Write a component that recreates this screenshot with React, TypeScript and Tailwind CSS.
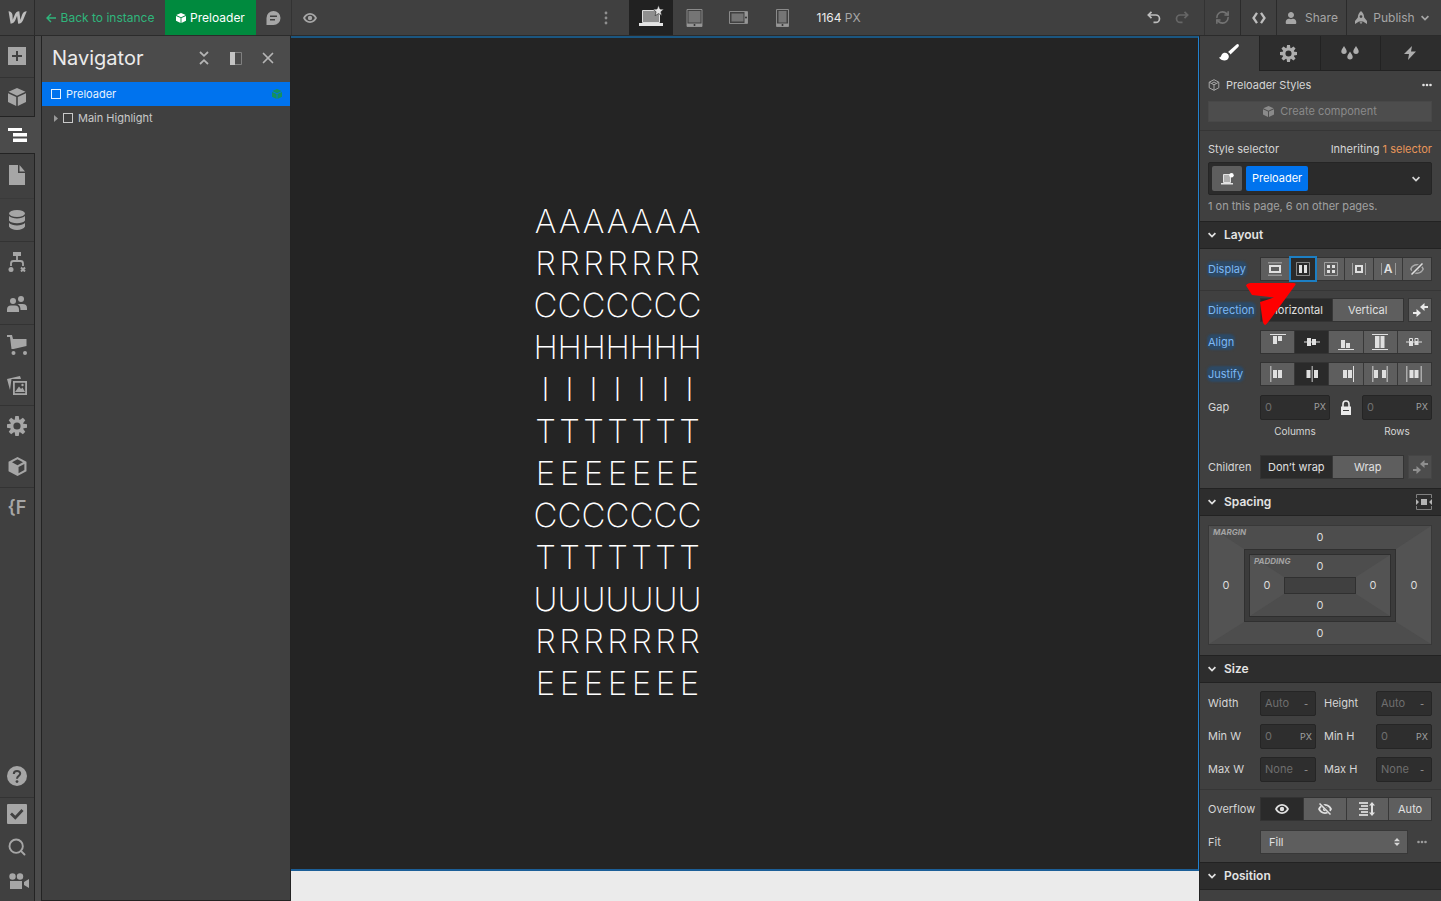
import type { ReactNode } from 'react'
import { RefreshCw, Search, X } from 'lucide-react'
import { FaUser } from 'react-icons/fa'
import { clsx } from 'clsx'

const WORD = 'ARCHITECTURE'.split('')

function Svg({ w = 16, h = w, box, children }: { w?: number; h?: number; box?: string; children: ReactNode }) {
  return (
    <svg width={w} height={h} viewBox={box ?? `0 0 ${w} ${h}`} fill="currentColor" className="shrink-0" aria-hidden>
      {children}
    </svg>
  )
}

/* ---------- icons ---------- */

const Logo = () => (
  <Svg w={19} h={13} box="0 4 24 16">
    <path d="M17.802 8.560s-1.946 6.103-2.105 6.607c-.058-.504-1.450-11.130-1.450-11.130-3.167 0-4.857 2.243-5.742 4.605 0 0-2.252 5.832-2.437 6.317-.013-.460-.344-6.272-.344-6.272C5.530 5.769 2.859 4.037.690 4.037l2.613 15.889c3.328-.013 5.125-2.256 6.063-4.618 0 0 2-5.172 2.081-5.410.013.226 1.437 10.028 1.437 10.028 3.340 0 5.139-2.110 6.104-4.389L23.700 4.037c-3.300 0-5.033 2.243-5.898 4.523z" />
  </Svg>
)

const Cube = ({ size = 18 }: { size?: number }) => (
  <Svg w={size} box="0 0 18 18">
    <path d="M9 0l8.500 3.800L9 7.800.500 3.800zM0 5.300l8.200 3.800V18L0 14zM18 5.300L9.800 9.100V18L18 14z" />
  </Svg>
)

const CubeLine = ({ size = 18 }: { size?: number }) => (
  <Svg w={size} box="0 0 18 18">
    <path d="M9 0l8.500 4.500v9L9 18 .5 13.500v-9zm0 2.200L3.800 5 9 7.800 14.200 5zM10 9.500v5.800l5.500-3V6.600z" fillRule="evenodd" />
  </Svg>
)

const CubeThin = () => (
  <Svg w={12} box="0 0 12 12">
    <path d="M6 .7l4.800 2.500v5.600L6 11.300 1.200 8.800V3.200zM1.200 3.200L6 5.800l4.800-2.600M6 5.800v5.500M3.500 4.500L6 3l2.500 1.500" fill="none" stroke="currentColor" />
  </Svg>
)

const Gear = ({ size = 20 }: { size?: number }) => (
  <Svg w={size} box="0 0 20 20">
    {[0, 45, 90, 135].map((a) => (
      <path key={a} d="M8.300 0h3.400l.8 5h-5zM8.300 20h3.400l.8-5h-5z" transform={`rotate(${a} 10 10)`} />
    ))}
    <circle cx="10" cy="10" r="5.200" fill="none" stroke="currentColor" strokeWidth="3.200" />
  </Svg>
)

const Brush = () => (
  <Svg w={20} h={17}>
    <path d="M0 13.500c2 0 2-1.500 2.800-3C4 8.500 7 8.200 8.800 10c1.800 2 1 4.500-.6 5.800C5.500 17.500 1.500 16 0 13.500zM9 8L17.500.500q1.500-1 2.200.200.500 1-.5 2.200L11.500 10.500q-.8-1.700-2.500-2.500z" />
  </Svg>
)

const Eye = ({ off = false }: { off?: boolean }) => (
  <Svg w={14} h={12}>
    <path d="M7 1C3.600 1 1.300 3.200 0 6c1.300 2.800 3.600 5 7 5s5.700-2.200 7-5C12.700 3.200 10.400 1 7 1zm0 1.800c2.300 0 3.900 1.300 4.900 3.200-1 1.900-2.600 3.200-4.900 3.200S3.100 7.900 2.100 6C3.100 4.100 4.700 2.800 7 2.800z" fillRule="evenodd" />
    <circle cx="7" cy="6" r="2.200" />
    {off && (
      <>
        <path d="M1.500-.5l12 12" stroke="#5e5e5e" strokeWidth="3" />
        <path d="M1.500.5l11 11" stroke="currentColor" strokeWidth="1.500" />
      </>
    )}
  </Svg>
)

const Chevron = () => (
  <Svg w={8} h={6}>
    <path d="M.6 1.200L4 4.600l3.400-3.400" fill="none" stroke="currentColor" strokeWidth="1.700" />
  </Svg>
)

const ThreeDots = () => (
  <Svg w={10} h={4}>
    <circle cx="1.500" cy="2" r="1.300" />
    <circle cx="5" cy="2" r="1.300" />
    <circle cx="8.500" cy="2" r="1.300" />
  </Svg>
)

const Desktop = () => (
  <Svg w={26} h={22}>
    <path d="M4.500 5.500h17v12h-17z" fill="#8f8f8f" stroke="#dcdcdc" />
    <path d="M1 18h24v3H1z" fill="#e4e4e4" />
    <path d="M20.500.300l1.500 3.700 4 .3-3.100 2.500 1 3.900-3.400-2.100-3.400 2.100 1-3.900L15 4.300l4-.3z" fill="#e4e4e4" stroke="#212121" strokeWidth=".6" />
  </Svg>
)

const Tablet = () => (
  <Svg w={17} h={18}>
    <path d="M1 .5h15v17H1z" fill="none" stroke="#8a8a8a" />
    <path d="M2.500 2h12v11.500h-12z" fill="#757575" />
    <path d="M1 14.500h15v3H1z" fill="#969696" />
    <circle cx="8.500" cy="16" r="1" fill="#333" />
  </Svg>
)

const PhoneWide = () => (
  <Svg w={19} h={13}>
    <path d="M.500.500h18v12H.500z" fill="none" stroke="#8a8a8a" />
    <path d="M2.500 2.500h12v8h-12z" fill="#757575" />
    <path d="M15.500 1h3v11h-3z" fill="#969696" />
    <circle cx="17" cy="6.500" r="1" fill="#333" />
  </Svg>
)

const Phone = () => (
  <Svg w={13} h={18}>
    <path d="M.500.500h12v17H.500z" fill="none" stroke="#8a8a8a" />
    <path d="M2.500 2h8v11.500h-8z" fill="#757575" />
    <path d="M.500 14.500h12v3H.500z" fill="#969696" />
    <circle cx="6.500" cy="16" r="1" fill="#333" />
  </Svg>
)

const Undo = ({ flip = false }: { flip?: boolean }) => (
  <Svg w={14} h={13}>
    <g transform={flip ? 'matrix(-1 0 0 1 14 0)' : undefined} fill="none" stroke="currentColor" strokeWidth="1.700">
      <path d="M4.500.800L1.300 4l3.200 3.200M1.500 4h7.300a3.700 3.700 0 0 1 0 7.400H6.500" />
    </g>
  </Svg>
)

const Swap = () => (
  <Svg w={15} h={14}>
    <path d="M7 4L11.500 0v3H15v2h-3.500v3zM8 10L3.500 6v3H0v2h3.500v3z" />
  </Svg>
)

/* ---------- left rail ---------- */

type RailItem = { label: string; icon: ReactNode; className: string }

const RAIL: RailItem[] = [
  {
    label: 'Add elements',
    className: 'h-[42px] border-b border-[#333] pb-0.5',
    icon: <Svg w={18}><path d="M0 0h18v18H0zM8 4v4H4v2h4v4h2v-4h4V8h-4V4z" fillRule="evenodd" /></Svg>,
  },
  { label: 'Components', className: 'h-[39px] border-b border-[#232323]', icon: <Cube /> },
  {
    label: 'Navigator',
    className: 'h-[37px] -mr-px bg-[#4b4b4b] text-white border-b border-[#232323]',
    icon: <Svg w={19} h={14}><path d="M0 0h14v3H0zM5 5h14v3.500H5zM5 10.500h14V14H5z" /></Svg>,
  },
  {
    label: 'Pages',
    className: 'h-[45px] border-b border-[#3a3a3a] pb-0.5',
    icon: <Svg w={16} h={20}><path d="M0 0h9v8h7v12H0zM10.500 0L16 6.500h-5.500z" /></Svg>,
  },
  {
    label: 'CMS',
    className: 'h-[43px] border-b border-[#333]',
    icon: (
      <Svg w={16} h={20}>
        <ellipse cx="8" cy="3.500" rx="8" ry="3.500" />
        <path d="M0 6c3 3.300 13 3.300 16 0v4.500c-2 3.500-14 3.500-16 0zM0 13c3 3.300 13 3.300 16 0v3.500c-2 4.500-14 4.500-16 0z" />
      </Svg>
    ),
  },
  {
    label: 'Logic',
    className: 'h-[41px] pb-0.5',
    icon: (
      <Svg w={18} h={20}>
        <path d="M5 0h8v4H5z" />
        <path d="M9 4v5M3 14v-2.500Q3 9 5.500 9h7q2.500 0 2.500 2.500V14" fill="none" stroke="currentColor" strokeWidth="1.800" />
        <circle cx="3" cy="17.500" r="2.500" />
        <path d="M13 15.500l4 4m0-4l-4 4" stroke="currentColor" strokeWidth="2" />
      </Svg>
    ),
  },
  {
    label: 'Users',
    className: 'h-[42px] border-b border-[#333]',
    icon: (
      <Svg w={20} h={16}>
        <circle cx="6" cy="5" r="3" />
        <circle cx="14" cy="3" r="3" />
        <path d="M0 16v-2.500C0 11 1.500 9.500 4 9.500h4c2.500 0 4 1.500 4 4V16zM10.500 8h5C18.500 8 20 9.500 20 12v2h-6.500c0-3-.8-4.800-3-6z" />
      </Svg>
    ),
  },
  {
    label: 'Ecommerce',
    className: 'h-[41px] pb-0.5',
    icon: (
      <Svg w={20} h={20}>
        <path d="M0 0h5l1 4h13.500v7L6.500 14h-2L3 2H0z" />
        <circle cx="6.500" cy="18" r="2" />
        <circle cx="18" cy="18" r="2" />
      </Svg>
    ),
  },
  {
    label: 'Assets',
    className: 'h-[40px] border-b border-[#333]',
    icon: (
      <Svg w={20} h={19}>
        <path d="M0 3L13 0l1 3H4.500L3 14z" />
        <path d="M6 5h14v14H6zm1.800 1.800v10.400h10.400V6.800z" fillRule="evenodd" />
        <path d="M8 16l4-5.500 2 2.500 1.500-1.500L18 16z" />
        <circle cx="15.500" cy="9" r="1.200" />
      </Svg>
    ),
  },
  { label: 'Settings', className: 'h-[41px] pb-0.5', icon: <Gear /> },
  { label: 'Apps', className: 'h-[41px] border-b border-[#333] pb-0.5', icon: <CubeLine size={19} /> },
  { label: 'Finsweet', className: 'h-[40px] text-lg leading-none font-semibold', icon: '{F' },
]

const RAIL_BOTTOM: RailItem[] = [
  {
    label: 'Help',
    className: 'h-[44px] border-b border-[#333]',
    icon: (
      <Svg w={20}>
        <circle cx="10" cy="10" r="10" />
        <path d="M6.800 8c0-4 6.400-4 6.400-.4C13.200 10 10 9.800 10 12.800" fill="none" stroke="#404040" strokeWidth="2" />
        <circle cx="10" cy="15.600" r="1.400" fill="#404040" />
      </Svg>
    ),
  },
  {
    label: 'Audit',
    className: 'h-[32px]',
    icon: <Svg w={20}><rect width="20" height="20" rx="1" /><path d="M4 9.500l4.300 4.300L15.500 6" fill="none" stroke="#404040" strokeWidth="2.800" /></Svg>,
  },
  { label: 'Search', className: 'h-[34px]', icon: <Search size={20} strokeWidth={2.3} /> },
  {
    label: 'Video tutorials',
    className: 'h-[34px] mb-[3px] pl-1',
    icon: (
      <Svg w={20} h={16}>
        <circle cx="3.500" cy="3.500" r="3.200" />
        <circle cx="11" cy="3.500" r="3.200" />
        <path d="M1 8h12v8H1zM20 6v9l-5-3v-3z" />
      </Svg>
    ),
  },
]

function Rail({ items }: { items: RailItem[] }) {
  return (
    <div className="flex flex-col">
      {items.map(({ label, icon, className }) => (
        <button key={label} aria-label={label} className={clsx('flex items-center justify-center shrink-0', className)}>
          {icon}
        </button>
      ))}
    </div>
  )
}

/* ---------- top bar ---------- */

function TopBar() {
  return (
    <header className="flex h-9 shrink-0 items-stretch border-b border-[#2b2b2b] bg-[#404040] text-xs text-[#a6a6a6]">
      <button aria-label="Menu" className="flex w-[35px] items-center justify-center border-r border-[#2b2b2b] text-[#bdbdbd]"><Logo /></button>
      <a href="#instance" className="flex w-[130px] items-center justify-center gap-1 text-[#2fb67c]">
        <Svg w={11} h={10}><path d="M5 1L1 5l4 4M1.500 5H10" fill="none" stroke="currentColor" strokeWidth="1.400" /></Svg>
        Back to instance
      </a>
      <button className="flex w-[91px] items-center justify-center gap-1 bg-[#008a3e] text-white">
        <Cube size={10} />
        Preloader
      </button>
      <button aria-label="Comments" className="flex w-9 items-center justify-center border-r border-[#333]">
        <Svg w={15} h={14}>
          <path d="M7.500 0a7 7 0 0 1 0 14H.500V7a7 7 0 0 1 7-7zM4 4.500V6h7V4.500zM4 8v1.500h5V8z" fillRule="evenodd" />
        </Svg>
      </button>
      <button aria-label="Preview" className="flex w-9 items-center justify-center"><Eye /></button>

      <div className="mx-auto flex items-stretch">
        <button aria-label="More breakpoints" className="flex w-[37px] items-center justify-center pr-2 text-[#8f8f8f]">
          <Svg w={4} h={14}>
            <circle cx="2" cy="2" r="1.400" />
            <circle cx="2" cy="7" r="1.400" />
            <circle cx="2" cy="12" r="1.400" />
          </Svg>
        </button>
        <button aria-label="Desktop" className="flex w-11 items-center justify-center bg-[#212121] pb-1"><Desktop /></button>
        <button aria-label="Tablet" className="flex w-11 items-center justify-center"><Tablet /></button>
        <button aria-label="Mobile landscape" className="flex w-11 items-center justify-center"><PhoneWide /></button>
        <button aria-label="Mobile portrait" className="flex w-11 items-center justify-center"><Phone /></button>
        <p className="w-[72px] self-center pl-3 whitespace-nowrap"><span className="text-[#ebebeb]">1164</span> PX</p>
      </div>

      <button aria-label="Undo" className="flex w-7 items-center justify-center text-[#bdbdbd]"><Undo /></button>
      <button aria-label="Redo" className="flex w-[37px] items-center justify-center border-r border-[#333] pr-2 text-[#666]"><Undo flip /></button>
      <button aria-label="Sync" className="flex w-9 items-center justify-center border-r border-[#2b2b2b] text-[#737373]"><RefreshCw size={15} strokeWidth={2.5} /></button>
      <button aria-label="Export code" className="flex w-9 items-center justify-center border-r border-[#2b2b2b] text-[#bdbdbd]">
        <Svg w={16} h={12}><path d="M6 .8L2.500 6 6 11.200M10 .8L13.500 6 10 11.200" fill="none" stroke="currentColor" strokeWidth="2.300" /></Svg>
      </button>
      <button className="flex w-[70px] items-center justify-center gap-2 border-r border-[#2b2b2b]">
        <FaUser size={12} />
        Share
      </button>
      <button className="flex w-[94px] items-center justify-center gap-1.5 pr-1">
        <Svg w={12} h={13}>
          <path d="M6 0c2.300 1.800 3 4 3.200 6.500L12 10v3L8 10.500H4L0 13v-3l2.800-3.500C3 4 3.700 1.800 6 0zm0 4.200a1.400 1.400 0 1 0 0 2.800 1.400 1.400 0 0 0 0-2.800z" fillRule="evenodd" />
          <path d="M4.500 11.200h3L6 13z" />
        </Svg>
        Publish
        <Chevron />
      </button>
    </header>
  )
}

/* ---------- navigator ---------- */

function Navigator() {
  return (
    <aside className="flex w-[250px] shrink-0 flex-col border-x border-b border-[#232323] bg-[#404040]">
      <div className="flex h-[46px] items-center bg-[#4b4b4b] pr-3 pb-0.5 pl-2.5 text-[#b5b5b5]">
        <h1 className="flex-1 text-xl text-[#ebebeb]">Navigator</h1>
        <button aria-label="Collapse all" className="mr-5">
          <Svg w={12} h={14}>
            <path d="M2 1l4 3.800L10 1M2 13l4-3.800 4 3.800" fill="none" stroke="currentColor" strokeWidth="1.800" />
          </Svg>
        </button>
        <button aria-label="Pin" className="mr-4">
          <Svg w={12} h={13}>
            <path d="M.500.500h11v12H.500z" fill="none" stroke="#808080" />
            <path d="M0 0h5v13H0z" fill="#c4c4c4" />
          </Svg>
        </button>
        <button aria-label="Close"><X size={18} strokeWidth={2.3} className="mx-px" /></button>
      </div>
      <ul className="text-[11px]">
        <li>
          <button className="flex h-6 w-full items-center bg-[#0073ee] pr-2 pl-[9px] text-[#e6f1fd]">
            <span className="mr-[5px] size-2.5 border border-current" />
            Preloader
            <span className="ml-auto text-[#14915f]"><Cube size={10} /></span>
          </button>
        </li>
        <li>
          <button className="flex h-6 w-full items-center pl-3 text-[#c9c9c9]">
            <span className="text-[#999]"><Svg w={4} h={7}><path d="M0 0l4 3.500L0 7z" /></Svg></span>
            <span className="mr-[5px] ml-[5px] size-2.5 border border-current" />
            Main Highlight
          </button>
        </li>
      </ul>
    </aside>
  )
}

/* ---------- style panel ---------- */

function SectionTitle({ children, extra }: { children: string; extra?: ReactNode }) {
  return (
    <h2 className="flex h-7 shrink-0 items-center justify-between border-y border-[#222] bg-[#2d2d2d] pr-[9px] pl-2 text-xs font-semibold text-[#e3e3e3]">
      <button className="flex items-center gap-2">
        <Chevron />
        {children}
      </button>
      {extra}
    </h2>
  )
}

function Row({ label, set = false, children }: { label: string; set?: boolean; children: ReactNode }) {
  return (
    <div className="flex h-6 items-center">
      <span className="w-[52px] shrink-0">
        <span className={clsx(set && 'rounded-sm bg-[#2d4964] text-[#7cb8f5] shadow-[0_0_2px_1px_#2d4964]')}>{label}</span>
      </span>
      <div className="flex min-w-0 flex-1 items-center">{children}</div>
    </div>
  )
}

function Group({ items, active }: { items: { name: string; view: ReactNode }[]; active: number }) {
  return (
    <div className="flex h-6 flex-1 gap-px border border-[#333] bg-[#383838]">
      {items.map(({ name, view }, i) => (
        <button
          key={name}
          aria-label={name}
          aria-pressed={i === active}
          className={clsx('flex flex-1 items-center justify-center text-[#e0e0e0]', i === active ? 'bg-[#2a2a2a]' : 'bg-[#5e5e5e]')}
        >
          {view}
        </button>
      ))}
    </div>
  )
}

function Field({ id, hint, unit }: { id: string; hint: string; unit: string }) {
  return (
    <div className="flex h-[25px] min-w-0 flex-1 items-center rounded-xs border border-[#252525] bg-[#2e2e2e] pr-[3px]">
      <input id={id} aria-label={id} placeholder={hint} className="w-0 min-w-0 flex-1 bg-transparent pl-1 outline-none placeholder:text-[#6e6e6e]" />
      <button className="min-w-3 text-[9px] text-[#a0a0a0]">{unit}</button>
    </div>
  )
}

const DISPLAY = [
  {
    name: 'Block',
    view: (
      <Svg w={14}>
        <path d="M0 0h14v1.500H0zM0 12.500h14V14H0z" opacity=".4" />
        <path d="M2 4h10v6H2z" fill="none" stroke="currentColor" strokeWidth="2" />
      </Svg>
    ),
  },
  {
    name: 'Flex',
    view: (
      <Svg w={14}>
        <path d="M.500.500h13v13H.500z" fill="none" stroke="currentColor" opacity=".5" />
        <path d="M3 3h3v8H3zM8 3h3v8H8z" />
      </Svg>
    ),
  },
  {
    name: 'Grid',
    view: (
      <Svg w={14}>
        <path d="M.500.500h13v13H.500z" fill="none" stroke="currentColor" opacity=".5" />
        <path d="M3 3h3v3H3zM8 3h3v3H8zM3 8h3v3H3zM8 8h3v3H8z" />
      </Svg>
    ),
  },
  {
    name: 'Inline block',
    view: (
      <Svg w={14}>
        <path d="M0 1h1v12H0zM13 1h1v12h-1z" opacity=".5" />
        <path d="M4 4h6v6H4z" fill="none" stroke="currentColor" strokeWidth="2" />
      </Svg>
    ),
  },
  {
    name: 'Inline',
    view: (
      <span className="flex h-3 items-center border-x border-[#999] px-0.5 text-xs font-semibold">A</span>
    ),
  },
  {
    name: 'None',
    view: (
      <Svg w={14} h={12}>
        <path d="M7 1.800C3.800 1.800 1.800 3.800.800 6c1 2.200 3 4.200 6.200 4.200S12.200 8.200 13.200 6c-1-2.200-3-4.200-6.200-4.200z" fill="none" stroke="currentColor" strokeWidth="1.500" opacity=".6" />
        <circle cx="7" cy="6" r="2.200" opacity=".7" />
        <path d="M.500 11.500L12.500.500" stroke="#5e5e5e" strokeWidth="4" />
        <path d="M1.500 11.500l11-11" stroke="currentColor" strokeWidth="1.500" />
      </Svg>
    ),
  },
]

const ALIGN = [
  { name: 'Start', view: <Svg><path d="M0 0h16v1H0zM3 2h4v8H3zM8 2h4v5H8z" /></Svg> },
  { name: 'Center', view: <Svg><path d="M0 7.500h16v1H0zM3 4h4v8H3zM8 5h4v6H8z" /></Svg> },
  { name: 'End', view: <Svg><path d="M0 15h16v1H0zM3 6h4v8H3zM8 9h4v5H8z" /></Svg> },
  { name: 'Stretch', view: <Svg><path d="M0 0h16v1H0zM0 15h16v1H0zM3 2h4.500v12H3zM8.500 2h4v12h-4z" /></Svg> },
  {
    name: 'Baseline',
    view: <Svg><path d="M0 7.500h16v1H0zM3 8.500h4V12H3zM8.500 8.500h4V11h-4z" /><path d="M3.500 4.500h3v3h-3zM9 4.500h3v3H9z" fill="none" stroke="currentColor" /></Svg>,
  },
]

const JUSTIFY = [
  { name: 'Start', view: <Svg><path d="M0 0h1.500v16H0z" opacity=".6" /><path d="M3 4h4v8H3zM8 4h4v8H8z" /></Svg> },
  { name: 'Center', view: <Svg><path d="M7.500 0H9v16H7.500z" opacity=".6" /><path d="M2.500 4h4v8h-4zM10 4h4v8h-4z" /></Svg> },
  { name: 'End', view: <Svg><path d="M15 0h1v16h-1zM5 4h4v8H5zM10 4h4v8h-4z" /></Svg> },
  { name: 'Space between', view: <Svg><path d="M0 0h1.500v16H0zM14.500 0H16v16h-1.500z" opacity=".6" /><path d="M2 4h4v8H2zM10 4h4v8h-4z" /></Svg> },
  { name: 'Space around', view: <Svg><path d="M0 0h1.500v16H0zM14.500 0H16v16h-1.500z" opacity=".6" /><path d="M3.500 4h4v8h-4zM8.500 4h4v8h-4z" /></Svg> },
]

const OVERFLOW = [
  { name: 'Visible', view: <Eye /> },
  { name: 'Hidden', view: <Eye off /> },
  {
    name: 'Scroll',
    view: (
      <Svg w={16} h={14}>
        <path d="M0 0h9v2H0zM2 3h7v2H2zM0 6h9v2H0zM2 9h7v2H2zM0 12h9v2H0z" opacity=".85" />
        <path d="M13 0l3 3.500h-2v7h2L13 14l-3-3.500h2v-7h-2z" />
      </Svg>
    ),
  },
  { name: 'Auto', view: 'Auto' },
]

const TABS = [
  { name: 'Style', icon: <Brush /> },
  { name: 'Settings', icon: <Gear size={17} /> },
  {
    name: 'Style manager',
    icon: (
      <Svg w={18} h={14}>
        <path d="M3 0c1.500 2.500 2.700 3.700 2.700 5.300a2.700 2.700 0 0 1-5.400 0C.3 3.700 1.500 2.500 3 0zM15 0c1.500 2.500 2.700 3.700 2.700 5.300a2.700 2.700 0 0 1-5.400 0C12.300 3.700 13.500 2.500 15 0zM9 5.500c1.500 2.500 2.700 3.700 2.700 5.300a2.700 2.700 0 0 1-5.400 0c0-1.600 1.200-2.800 2.700-5.300z" />
      </Svg>
    ),
  },
  { name: 'Interactions', icon: <Svg w={12} h={14}><path d="M8 0L0 8h5l-1 6 8-8.500H7z" /></Svg> },
]

const SIDES = ['top-[3px]', 'bottom-[3px]', 'left-[11px] top-1/2 -translate-y-1/2', 'right-[11px] top-1/2 -translate-y-1/2']

function Sides({ name }: { name: string }) {
  return SIDES.map((side, i) => (
    <button
      key={side}
      aria-label={`${name} ${['top', 'bottom', 'left', 'right'][i]}`}
      className={clsx('absolute flex h-4 w-3 items-center justify-center text-[#dcdcdc]', side, i < 2 && 'left-1/2 -translate-x-1/2')}
    >
      0
    </button>
  ))
}

// The mitred border joints give the four slanted sides of each box.
function SpacingBox() {
  return (
    <div className="relative h-[120px] border border-[#383838]">
      <div className="h-full border-x-[35px] border-t-[23px] border-b-[22px] border-x-[#535353] border-y-[#4d4d4d]">
        <div className="h-full border border-[#303030] bg-[#3b3b3b] p-1">
          <div className="relative h-full border border-[#2e2e2e]">
            <div className="h-full border-x-[34px] border-y-[22px] border-x-[#535353] border-y-[#4d4d4d]">
              <div className="h-full border border-[#303030] bg-[#404040]" />
            </div>
            <span className="absolute top-0 left-1 text-[8px] font-bold text-[#a3a3a3] italic">PADDING</span>
            <Sides name="Padding" />
          </div>
        </div>
      </div>
      <span className="absolute top-0 left-1 text-[8px] font-bold text-[#a3a3a3] italic">MARGIN</span>
      <Sides name="Margin" />
    </div>
  )
}

const SIZES = [
  ['Width', 'Auto', '-'],
  ['Height', 'Auto', '-'],
  ['Min W', '0', 'PX'],
  ['Min H', '0', 'PX'],
  ['Max W', 'None', '-'],
  ['Max H', 'None', '-'],
]

function StylePanel() {
  return (
    <aside className="flex w-[241px] shrink-0 flex-col overflow-hidden bg-[#404040] text-[11px] text-[#d6d6d6]">
      <div className="flex h-[35px] shrink-0">
        {TABS.map(({ name, icon }, i) => (
          <button
            key={name}
            aria-label={name}
            className={clsx(
              'flex items-center justify-center',
              i === 0 ? 'w-[59px] pr-0.5 pb-0.5 text-white' : 'flex-1 border-b border-l border-[#222] bg-[#2d2d2d] pr-0.5 text-[#adadad]',
            )}
          >
            {icon}
          </button>
        ))}
      </div>

      <div className="h-[60px] shrink-0 border-b border-[#363636] pt-1.5 pr-[9px] pl-2">
        <div className="flex h-4 items-center gap-1.5">
          <span className="text-[#a6a6a6]"><CubeThin /></span>
          Preloader Styles
          <button aria-label="More" className="ml-auto text-[#e3e3e3]"><ThreeDots /></button>
        </div>
        <button className="mt-2 flex h-[21px] w-full items-center justify-center gap-1.5 border border-[#484848] bg-[#4d4d4d] text-[#8a8a8a]">
          <Cube size={11} />
          Create component
        </button>
      </div>

      <div className="h-[90px] shrink-0 pt-2.5 pr-[9px] pl-2">
        <div className="flex h-4 items-center justify-between">
          <span>Style selector</span>
          <span>Inheriting <a href="#selectors" className="text-[#e8965a]">1 selector</a></span>
        </div>
        <div className="mt-[5px] flex h-[33px] items-center gap-1 rounded-xs border border-[#252525] bg-[#2b2b2b] px-[3px]">
          <button aria-label="Breakpoint" className="flex h-[25px] w-[30px] items-center justify-center rounded-xs bg-[#5e5e5e] text-[#e3e3e3]">
            <Svg w={13} h={12}>
              <path d="M2.500 1.500h7v8h-7z" fill="#b0b0b0" stroke="currentColor" />
              <path d="M0 10h12v1.500H0z" />
              <circle cx="10.500" cy="2.300" r="2.200" fill="#fff" />
            </Svg>
          </button>
          <button className="h-[25px] rounded-xs bg-[#0073ee] px-1.5 text-white">Preloader</button>
          <button aria-label="Open selectors" className="mr-2 ml-auto"><Chevron /></button>
        </div>
        <p className="mt-[3px] leading-4 text-[#a0a0a0]">1 on this page, 6 on other pages.</p>
      </div>

      <SectionTitle>Layout</SectionTitle>
      <div className="h-[42px] shrink-0 border-b border-[#363636] pt-2 pr-[9px] pl-2">
        <Row label="Display" set>
          <div className="flex h-6 flex-1 gap-px border border-[#333] bg-[#383838]">
            {DISPLAY.map(({ name, view }) => (
              <button
                key={name}
                aria-label={name}
                className={clsx(
                  'flex flex-1 items-center justify-center text-[#e0e0e0]',
                  name === 'Flex' ? 'z-10 -mx-px -my-0.5 bg-[#2a2a2a] ring-2 ring-[#1c7fc4] ring-inset' : 'bg-[#5e5e5e]',
                )}
              >
                {view}
              </button>
            ))}
          </div>
        </Row>
      </div>
      <div className="relative flex shrink-0 flex-col gap-2 pt-[7px] pr-[9px] pb-[9px] pl-2">
        <Row label="Direction" set>
          <Group active={0} items={['Horizontal', 'Vertical'].map((name) => ({ name, view: name }))} />
          <button aria-label="Reverse" className="ml-1 flex h-6 w-6 items-center justify-center border border-[#363636] bg-[#5e5e5e] text-[#ebebeb]"><Swap /></button>
        </Row>
        <Row label="Align" set><Group active={1} items={ALIGN} /></Row>
        <Row label="Justify" set><Group active={1} items={JUSTIFY} /></Row>
        <div className="pt-px">
          <Row label="Gap">
            <Field id="Column gap" hint="0" unit="PX" />
            <button aria-label="Lock gaps" className="flex w-8 justify-center text-[#ebebeb]">
              <Svg w={12} h={15}>
                <path d="M1 6.500h10V15H1zM3 10v1h6v-1z" fillRule="evenodd" />
                <path d="M3 7V4a3 3 0 0 1 6 0v3" fill="none" stroke="currentColor" strokeWidth="1.600" />
              </Svg>
            </button>
            <Field id="Row gap" hint="0" unit="PX" />
          </Row>
          <div className="mt-1 flex h-4 items-center gap-8 pl-[52px] text-center text-[10px]">
            <span className="flex-1">Columns</span>
            <span className="flex-1">Rows</span>
          </div>
        </div>
        <div className="pt-2">
          <Row label="Children">
            <Group active={0} items={['Don’t wrap', 'Wrap'].map((name) => ({ name, view: name }))} />
            <button aria-label="Reverse wrap" className="ml-1 flex h-6 w-6 items-center justify-center border border-[#454545] bg-[#4d4d4d] text-[#8f8f8f]"><Swap /></button>
          </Row>
        </div>
        {/* annotation arrow */}
        <div className="pointer-events-none absolute -top-2 left-[46px] text-[#ff0000]">
          <Svg w={51} h={42}>
            <path d="M0 2.500Q1 0 5 0h42q4 0 2 2.500L23 38q-3 4-4 4-2-1-2.500-5L14 19l14-4.500L6 12z" />
          </Svg>
        </div>
      </div>

      <SectionTitle
        extra={
          <Svg w={16} h={16}>
            <path d="M.500 4V.500h15V4M.500 12v3.500h15V12" fill="none" stroke="#808080" />
            <path d="M5 5h6v6H5zM0 5l3 3-3 3zM16 5l-3 3 3 3z" fill="#b5b5b5" />
          </Svg>
        }
      >
        Spacing
      </SectionTitle>
      <div className="shrink-0 pt-[9px] pr-[9px] pb-2.5 pl-2"><SpacingBox /></div>

      <SectionTitle>Size</SectionTitle>
      <div className="grid shrink-0 grid-cols-2 gap-2 border-b border-[#363636] pt-2 pr-[9px] pb-[7px] pl-2">
        {SIZES.map(([label, hint, unit]) => (
          <div key={label} className="flex items-center">
            <label htmlFor={label} className="w-[52px]">{label}</label>
            <Field id={label} hint={hint} unit={unit} />
          </div>
        ))}
      </div>
      <div className="flex shrink-0 flex-col gap-[9px] pt-[7px] pr-[9px] pb-2 pl-2">
        <Row label="Overflow"><Group active={0} items={OVERFLOW} /></Row>
        <Row label="Fit">
          <div className="relative flex-1">
            <select aria-label="Fit" className="h-6 w-full appearance-none border border-[#383838] bg-[#5e5e5e] pl-2 text-[#e0e0e0]">
              <option>Fill</option>
            </select>
            <span className="pointer-events-none absolute top-2 right-2">
              <Svg w={6} h={8}><path d="M3 0l3 3.300H0zM3 8l3-3.300H0z" /></Svg>
            </span>
          </div>
          <button aria-label="Fit options" className="flex w-6 justify-end pr-[5px] text-[#9c9c9c]"><ThreeDots /></button>
        </Row>
      </div>
      <SectionTitle>Position</SectionTitle>
    </aside>
  )
}

export default function App() {
  return (
    <div className="flex h-screen flex-col overflow-hidden bg-[#404040] font-['Inter',sans-serif]">
      <TopBar />
      <div className="flex min-h-0 flex-1">
        <nav className="flex w-[35px] shrink-0 flex-col justify-between border-r border-[#232323] text-[#a6a6a6]">
          <Rail items={RAIL} />
          <Rail items={RAIL_BOTTOM} />
        </nav>
        <div className="w-1.5 shrink-0 bg-[#4b4b4b]" />
        <Navigator />
        <main className="flex min-w-0 flex-1 flex-col border-r border-[#232323] bg-[#ebebeb]">
          <div className="flex flex-1 flex-col items-center justify-center border-t-2 border-r border-b-2 border-t-[#1b5680] border-r-[#2181cf] border-b-[#1c5f98] bg-[#242424] pr-[254px] pb-0.5">
            {WORD.map((letter, i) => (
              <div key={i} className="grid h-[42px] grid-cols-7 place-items-center text-[33px] leading-none font-extralight text-white">
                {Array.from({ length: 7 }, (_, n) => <span key={n} className="w-6 text-center">{letter}</span>)}
              </div>
            ))}
          </div>
          <div className="h-[30px]" />
        </main>
        <StylePanel />
      </div>
    </div>
  )
}
